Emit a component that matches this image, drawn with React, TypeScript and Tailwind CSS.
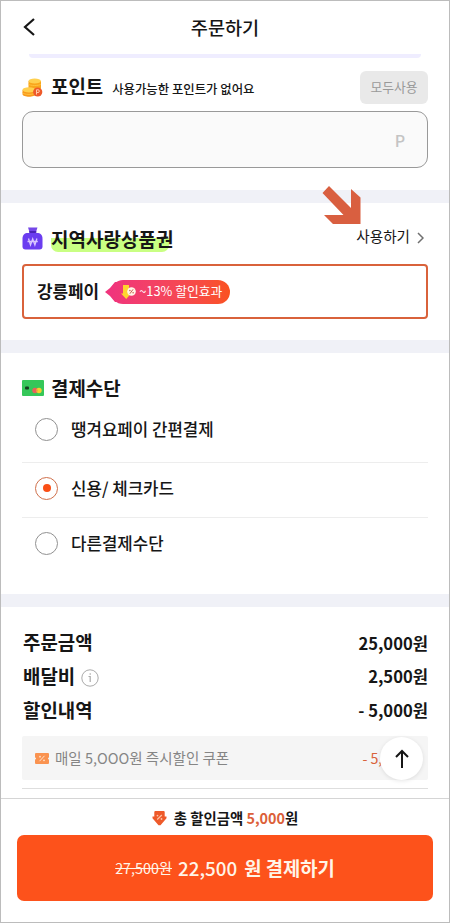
import type { ReactNode } from "react";

function CoinsIcon() {
  return (
    <svg width="21" height="20" viewBox="0 0 21 20" className="shrink-0">
      <path d="M6.500 3v7c0 3 12.500 3 12.500 0V3z" fill="#f9a51b" />
      <ellipse cx="12.700" cy="3" rx="6.200" ry="2.400" fill="#ffd04f" />
      <path d="M6.500 6c1 2 11.500 2 12.500 0" stroke="#ffc23c" strokeWidth="1" fill="none" />
      <path d="M0.500 12v4c0 3.600 13 3.600 13 0v-4z" fill="#f99a1c" />
      <ellipse cx="7" cy="11.800" rx="6.500" ry="2.600" fill="#ffd04f" />
      <path d="M0.500 14.500c1 2.500 12 2.500 13 0" stroke="#ffc23c" strokeWidth="1" fill="none" />
      <circle cx="15.700" cy="14" r="4.600" fill="#ee5a2a" />
      <path d="M14.500 16.500v-4.700h1.500a1.300 1.300 0 0 1 0 2.700h-1.500" stroke="#ffc9a8" strokeWidth="1" fill="none" />
    </svg>
  );
}

function PouchIcon() {
  return (
    <svg width="21" height="23" viewBox="0 0 21 23" className="shrink-0">
      <path d="M6 0.500h9.500l-1.500 4.500h-6.500z" fill="#7547e8" />
      <path d="M6 6c-3.500 0-5.500 2-5.500 5.500v8c0 2 1 3 3 3h14c2 0 3-1 3-3v-8C20.500 8 18.500 6 15 6z" fill="#6b3df0" />
      <rect x="7" y="4" width="7.500" height="2" rx="1" fill="#4a22b8" />
      <path d="M6.500 11.500l2 6.500 2.200-6 2.200 6 2-6.500M5.500 14.500h10.300" stroke="#d9c6ff" strokeWidth="1.300" fill="none" />
    </svg>
  );
}

function CardIcon() {
  return (
    <svg width="22" height="16" viewBox="0 0 22 16" className="shrink-0">
      <rect width="22" height="16" rx="1" fill="#35c759" />
      <rect x="3" y="6.500" width="4" height="3" rx="1" fill="#143d1f" />
      <circle cx="13" cy="10.500" r="2.700" fill="#e8625a" />
      <circle cx="17" cy="10.500" r="2.700" fill="#f5d02e" />
      <path d="M15 8.700a2.700 2.700 0 0 1 0 3.600 2.700 2.700 0 0 1 0-3.600" fill="#f0963c" />
    </svg>
  );
}

function SaleIcon() {
  return (
    <svg width="15" height="16" viewBox="0 0 15 16" className="shrink-0">
      <path d="M2 1h6v8h2.500L5.200 15 0 9.500h2z" fill="#ffd42e" />
      <circle cx="10.500" cy="7.500" r="4.300" fill="#fff6e8" />
      <path d="M8.900 9.700l3.200-4.400" stroke="#c4503f" strokeWidth="0.900" />
      <circle cx="8.900" cy="6.500" r="0.700" fill="#c4503f" />
      <circle cx="12.100" cy="8.700" r="0.700" fill="#c4503f" />
    </svg>
  );
}

function CouponIcon() {
  return (
    <svg width="14" height="11" viewBox="0 0 14 11" className="shrink-0">
      <path d="M1 0h12a1 1 0 0 1 1 1v3.500a1 1 0 0 0 0 2V10a1 1 0 0 1-1 1H1a1 1 0 0 1-1-1V6.500a1 1 0 0 0 0-2V1a1 1 0 0 1 1-1z" fill="#fa9350" />
      <path d="M4.500 8.200l5-5.400" stroke="#ffe3cd" strokeWidth="1" />
      <circle cx="5" cy="3.700" r="0.900" fill="#ffe3cd" />
      <circle cx="9" cy="7.300" r="0.900" fill="#ffe3cd" />
    </svg>
  );
}

function DiscountIcon() {
  return (
    <svg width="15" height="15" viewBox="0 0 15 15" className="shrink-0">
      <path d="M3 0h9l.7.700V5.500H14.500v1.800L8.500 14.200h-2L0.500 7.300V5.500h1.800V.700z" fill="#ee5a2a" />
      <path d="M5.200 8.500l4.600-4.500" stroke="#ffc4a6" strokeWidth="1.100" />
      <circle cx="5.500" cy="4.600" r="0.900" fill="#ffc4a6" />
      <circle cx="9.500" cy="8" r="0.900" fill="#ffc4a6" />
    </svg>
  );
}

function Divider() {
  return <div className="h-[13px] shrink-0 bg-[#f0f1f7]" />;
}

function Option({ label, checked = false, className }: { label: string; checked?: boolean; className: string }) {
  return (
    <div className={`flex items-center pl-[13px] ${className}`}>
      <span
        className={`flex size-[23px] items-center justify-center rounded-full border ${checked ? "border-[#cf704b]" : "border-[#919191]"}`}
      >
        {checked && <span className="size-2 rounded-full bg-[#fa4f16]" />}
      </span>
      <span className="ml-[13px] text-[16.8px] font-medium">{label}</span>
    </div>
  );
}

function Amount({ label, value }: { label: ReactNode; value: string }) {
  return (
    <div className="flex h-[33.7px] items-center justify-between">
      <span className="ml-px flex items-center text-[18.9px] font-bold">{label}</span>
      <span className="text-[16.6px] font-bold">{value}</span>
    </div>
  );
}

export default function App() {
  return (
    <div className="flex h-[923px] w-[450px] flex-col overflow-hidden border border-[#bcbcbc] bg-white font-['Noto_Sans_CJK_KR',sans-serif] leading-none whitespace-nowrap text-[#161616]">
      <header className="relative flex h-[53px] shrink-0 items-center justify-center">
        <svg width="12" height="18" viewBox="0 0 12 18" fill="none" className="absolute top-[17px] left-[22px]">
          <path d="M11 1L2 9l9 8" stroke="#161616" strokeWidth="2.200" />
        </svg>
        <h1 className="pb-px text-[18.6px] font-medium">주문하기</h1>
      </header>

      <section className="flex h-[136px] shrink-0 flex-col px-[21px]">
        <div className="mx-[7px] h-1 rounded-b-[8px] bg-[#efedff]" />
        <div className="mt-[13px] flex h-[33px] items-center">
          <CoinsIcon />
          <h2 className="ml-2 pb-0.5 text-[18.9px] font-bold">포인트</h2>
          <span className="mt-1 ml-[9px] text-[12.4px] font-medium">사용가능한 포인트가 없어요</span>
          <button className="ml-auto h-[33px] w-[68px] rounded-[6px] bg-[#e9e9e9] text-[12.8px] text-[#999]">모두사용</button>
        </div>
        <div className="mt-[7px] flex h-[57px] items-center justify-end rounded-[11px] border border-[#999] bg-[#fafafa] pr-[22px] text-[16px] font-medium text-[#c4c4c4]">
          P
        </div>
      </section>
      <Divider />

      <section className="relative flex h-[137px] shrink-0 flex-col px-[21px] pt-[23px]">
        <svg width="40" height="39" viewBox="0 0 40 39" className="absolute -top-[17px] left-[321px]">
          <path d="M7 0L29 22V3l9.500 8.500V38H11l-9-9h19.500L0.500 7z" fill="#d95f40" />
        </svg>
        <div className="flex h-[25px] items-center">
          <PouchIcon />
          <h2 className="ml-2 w-[118px] rounded-b-[7px] bg-[linear-gradient(transparent_46%,#c9ff83_46%)] text-[19px] leading-[26px] font-bold">
            지역사랑상품권
          </h2>
          <button className="ml-auto flex items-center pr-1 pb-1 text-[14.600px]">
            사용하기
            <svg width="7" height="12" viewBox="0 0 7 12" fill="none" className="mt-0.5 ml-[7px]">
              <path d="M1 1l5 5-5 5" stroke="#707070" strokeWidth="1.500" />
            </svg>
          </button>
        </div>
        <div className="mt-[13px] flex h-[55px] items-center rounded-[4px] border-2 border-[#d9623b] pl-[13px]">
          <span className="text-[16.9px] font-bold">강릉페이</span>
          <span className="ml-1.5 flex items-center">
            <svg width="12" height="24" viewBox="0 0 12 24" className="-mr-1.5">
              <path d="M0 12L5 8l5-6h2v20h-2l-5-6z" fill="#f0347c" />
            </svg>
            <span className="flex h-6 w-[119px] items-center rounded-full bg-linear-to-r from-[#f0347c] to-[#fa521e] pl-2.5 text-[12.800px] text-white">
              <SaleIcon />
              <span className="ml-[3px]">~13% 할인효과</span>
            </span>
          </span>
        </div>
      </section>
      <Divider />

      <section className="flex h-[241px] shrink-0 flex-col px-[21px] pt-[23px]">
        <div className="flex h-6 items-center">
          <CardIcon />
          <h2 className="ml-[7px] text-[18.9px] font-bold">결제수단</h2>
        </div>
        <Option label="땡겨요페이 간편결제" className="h-[63px] border-b border-[#ededed] pb-1" />
        <Option label="신용/ 체크카드" checked className="h-[55px] border-b border-[#ededed] pb-1" />
        <Option label="다른결제수단" className="h-[51px]" />
      </section>
      <Divider />

      <section className="relative flex h-[191px] shrink-0 flex-col px-[21px] pt-[19px]">
        <Amount label="주문금액" value="25,000원" />
        <Amount
          label={
            <>
              배달비
              <svg width="18" height="18" viewBox="0 0 18 18" fill="none" className="mt-0.5 ml-1.5">
                <circle cx="9" cy="9" r="8.200" stroke="#aaa" />
                <path d="M7.500 7.500h1.700v5.500M9.200 4.300v1.500" stroke="#aaa" strokeWidth="1.200" />
              </svg>
            </>
          }
          value="2,500원"
        />
        <Amount label="할인내역" value="- 5,000원" />
        <div className="mt-[9px] flex h-11 shrink-0 items-center justify-between rounded-[2px] bg-[#f5f5f5] pr-[9px] pl-[13px] text-[14.500px] text-[#858585]">
          <span className="flex items-center">
            <CouponIcon />
            <span className="ml-[6px]">매일 5,OOO원 즉시할인 쿠폰</span>
          </span>
          <span className="text-[14.200px] text-[#d9623b]">- 5,000원</span>
        </div>
        <div className="mt-2 border-t border-[#dedede]" />
        <button className="absolute top-[130px] right-[26px] flex size-[43px] items-center justify-center rounded-full bg-white shadow-[0_1px_4px_rgba(0,0,0,0.1)]">
          <svg width="14" height="20" viewBox="0 0 14 20" fill="none">
            <path d="M7 19V2M1 8l6-6 6 6" stroke="#161616" strokeWidth="2" />
          </svg>
        </button>
      </section>

      <footer className="flex grow flex-col border-t border-[#d5d5d5] px-4">
        <div className="flex h-9 items-center justify-center pt-[3px] text-[14.400px] font-bold">
          <DiscountIcon />
          <span className="ml-[7px]">
            총 할인금액 <span className="text-[#dc6039]">5,000</span>원
          </span>
        </div>
        <button className="flex h-[66px] items-center justify-center rounded-[7px] bg-[#fd521b] text-[18.800px] font-bold text-[#fff5e8]">
          <span className="mr-1.5 text-[14.300px] font-normal line-through">27,500원</span>
          <span className="mr-[7px] font-medium">22,500</span>
          <span>원 결제하기</span>
        </button>
      </footer>
    </div>
  );
}
